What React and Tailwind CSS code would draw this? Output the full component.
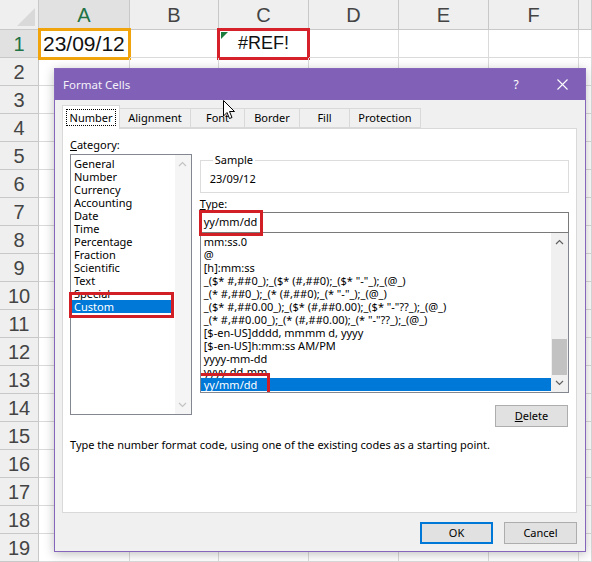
import React from 'react';

const UI = "'Noto Sans', 'Open Sans', sans-serif";
const SHEET = "'Liberation Sans', Arial, sans-serif";

const columns = [
  { label: 'A', selected: true },
  { label: 'B' },
  { label: 'C' },
  { label: 'D' },
  { label: 'E' },
  { label: 'F' },
  { label: '' },
];

const categories = [
  'General', 'Number', 'Currency', 'Accounting', 'Date', 'Time',
  'Percentage', 'Fraction', 'Scientific', 'Text', 'Special', 'Custom',
];

const formats = [
  'mm:ss.0',
  '@',
  '[h]:mm:ss',
  '_($* #,##0_);_($* (#,##0);_($* "-"_);_(@_)',
  '_(* #,##0_);_(* (#,##0);_(* "-"_);_(@_)',
  '_($* #,##0.00_);_($* (#,##0.00);_($* "-"??_);_(@_)',
  '_(* #,##0.00_);_(* (#,##0.00);_(* "-"??_);_(@_)',
  '[$-en-US]dddd, mmmm d, yyyy',
  '[$-en-US]h:mm:ss AM/PM',
  'yyyy-mm-dd',
  'yyyy-dd-mm',
  'yy/mm/dd',
];

const tabs = ['Number', 'Alignment', 'Font', 'Border', 'Fill', 'Protection'];
const tabWidths = ['w-[58px]', 'w-[71px]', 'w-[54px]', 'w-[55px]', 'w-[50px]', 'w-[71px]'];

const Chevron = ({ up, color }) => (
  <svg width="9" height="6" viewBox="0 0 9 6">
    <polyline
      points={up ? '1,5 4.5,1.5 8,5' : '1,1 4.5,4.5 8,1'}
      fill="none"
      stroke={color}
      strokeWidth="1.2"
    />
  </svg>
);

const Sheet = () => (
  <div
    className="grid grid-cols-[39px_91px_89px_90px_90px_90px_90px_1fr] grid-rows-[30px_repeat(19,28px)] bg-white"
    style={{ fontFamily: SHEET }}
  >
    {/* corner */}
    <div className="bg-[#efefef] border-r border-b border-[#c8c8c8] flex items-end justify-end p-[3px]">
      <svg width="18" height="18">
        <polygon points="18,0 18,18 0,18" fill="#d9d9d9" />
      </svg>
    </div>
    {columns.map((c, i) => (
      <div
        key={'h' + i}
        className={`border-r border-b border-[#c8c8c8] flex items-center justify-center text-[20px] ${
          c.selected ? 'bg-[#e1e1e1] text-[#217346]' : 'bg-[#efefef] text-[#444]'
        }`}
      >
        {c.label}
      </div>
    ))}
    {Array.from({ length: 19 }, (_, r) => (
      <React.Fragment key={r}>
        <div
          className={`border-r border-b border-[#c8c8c8] flex items-center justify-center text-[20px] ${
            r === 0 ? 'bg-[#e1e1e1] text-[#217346]' : 'bg-[#efefef] text-[#444]'
          }`}
        >
          {r + 1}
        </div>
        {columns.map((c, i) => (
          <div key={i} className="relative border-r border-b border-[#dadada]">
            {r === 0 && i === 0 && (
              <>
                <div className="absolute left-[4px] top-0 bottom-0 flex items-center text-[21px] text-[#111]">
                  23/09/12
                </div>
                <div className="absolute -left-[1px] -right-[2px] -top-[2px] -bottom-[3px] border-[3px] border-[#f0a30a]" />
              </>
            )}
            {r === 0 && i === 2 && (
              <>
                <div className="absolute inset-0 flex items-center justify-center text-[18px] text-[#111]">
                  #REF!
                </div>
                <div className="absolute left-[2px] top-[2px] w-0 h-0 border-t-[7px] border-r-[7px] border-t-[#1e7b3e] border-r-transparent" />
                <div className="absolute -left-[2px] -right-[2px] -top-[2px] -bottom-[3px] border-[3px] border-[#d6202a]" />
              </>
            )}
          </div>
        ))}
      </React.Fragment>
    ))}
  </div>
);

const Dialog = () => (
  <div
    className="absolute left-[54px] top-[68px] w-[532px] h-[484px] border border-[#8566bb] bg-[#f0f0f0] shadow-[0_2px_10px_rgba(0,0,0,0.25)] flex flex-col"
    style={{ fontFamily: UI }}
  >
    {/* title bar */}
    <div className="h-[31px] bg-[#8061b7] flex items-center justify-between pl-[8px] text-white shrink-0">
      <span className="text-[11.5px] text-[#f4f1fa]">Format Cells</span>
      <div className="flex items-center">
        <span className="text-[12px] w-[46px] text-center">?</span>
        <span className="w-[46px] flex justify-center">
          <svg width="11" height="11" viewBox="0 0 11 11">
            <path d="M0.5 0.5 L10.5 10.5 M10.5 0.5 L0.5 10.5" stroke="white" strokeWidth="1.1" />
          </svg>
        </span>
      </div>
    </div>

    <div className="flex-1 flex flex-col px-[7px] pt-[4px]">
      {/* tabs */}
      <div className="flex items-end h-[24px] text-[11px] text-black">
        {tabs.map((t, i) =>
          i === 0 ? (
            <div
              key={t}
              className={`${tabWidths[i]} h-[24px] bg-white border border-b-0 border-[#d9d9d9] flex items-center justify-center relative z-10 -mb-[1px]`}
            >
              <span className="border border-dotted border-black px-[3px] leading-[15px]">{t}</span>
            </div>
          ) : (
            <div
              key={t}
              className={`${tabWidths[i]} h-[20px] bg-[#f0f0f0] border border-l-0 border-[#d9d9d9] flex items-center justify-center`}
            >
              {t}
            </div>
          )
        )}
      </div>

      {/* panel */}
      <div className="w-[515px] h-[385px] bg-white border border-[#d9d9d9] flex flex-col px-[7px] pt-[8px] text-[11px] text-black">
        <div className="flex gap-[8px]">
          {/* category */}
          <div className="w-[122px] flex flex-col">
            <div className="h-[17px] leading-[16px]">
              <span className="underline">C</span>ategory:
            </div>
            <div className="h-[261px] border border-[#828790] flex">
              <div className="flex-1 pt-[2px] pr-[3px]">
                {categories.map((c) => (
                  <div
                    key={c}
                    className={`relative h-[13px] leading-[13px] pl-[3px] ${
                      c === 'Custom' ? 'bg-[#0078d7] text-white' : ''
                    }`}
                  >
                    {c}
                    {c === 'Custom' && (
                      <div className="absolute -left-[2px] -right-[2px] -top-[8px] -bottom-[5px] border-[3px] border-[#d21f26]" />
                    )}
                  </div>
                ))}
              </div>
              <div className="w-[16px] bg-[#f5f5f5] flex flex-col items-center justify-between py-[6px]">
                <Chevron up color="#c3c3c3" />
                <Chevron color="#c3c3c3" />
              </div>
            </div>
          </div>

          {/* type */}
          <div className="w-[370px] flex flex-col pt-[17px]">
            <fieldset className="border border-[#dcdcdc] h-[40px] px-[9px] -mt-[1px]">
              <legend className="px-[2px] ml-[3px] leading-[14px]">Sample</legend>
              <div className="pt-[5px] leading-[14px]">23/09/12</div>
            </fieldset>
            <div className="mt-[3px] h-[16px] leading-[16px]">
              <span className="underline">T</span>ype:
            </div>
            <div className="h-[21px] border border-[#7a7a7a] flex items-center pl-[3px] relative">
              <span className="relative">
                yy/mm/dd
                <span className="absolute -left-[5px] -right-[6px] -top-[4px] -bottom-[5px] border-[3px] border-[#d21f26]" />
              </span>
            </div>
            <div className="h-[160px] border border-t-0 border-[#828790] flex">
              <div className="flex-1 pt-[2px] overflow-hidden">
                {formats.map((f, i) => (
                  <div
                    key={i}
                    className={`relative h-[13px] leading-[13px] pl-[3px] whitespace-nowrap ${
                      i === formats.length - 1 ? 'bg-[#0078d7] text-white' : ''
                    }`}
                  >
                    {f}
                    {i === formats.length - 1 && (
                      <div className="absolute -left-[4px] w-[73px] -top-[5px] -bottom-[4px] border-[3px] border-[#d21f26]" />
                    )}
                  </div>
                ))}
              </div>
              <div className="w-[17px] bg-[#f0f0f0] flex flex-col items-center py-[6px]">
                <Chevron up color="#606060" />
                <div className="flex-1" />
                <div className="w-[15px] h-[36px] bg-[#c2c2c2] mb-[5px]" />
                <Chevron color="#606060" />
              </div>
            </div>
            <div className="flex justify-end mt-[12px] pr-[1px]">
              <button className="w-[73px] h-[22px] bg-[#e1e1e1] border border-[#adadad] text-[11px]">
                <span className="underline">D</span>elete
              </button>
            </div>
          </div>
        </div>
        <div className="mt-[11px] leading-[14px]">
          Type the number format code, using one of the existing codes as a starting point.
        </div>
      </div>

      {/* buttons */}
      <div className="flex justify-end gap-[11px] mt-[9px] pr-[1px] text-[11px]">
        <button className="w-[73px] h-[22px] bg-[#e1e1e1] border-2 border-[#0078d7]">OK</button>
        <button className="w-[73px] h-[22px] bg-[#e1e1e1] border border-[#adadad]">Cancel</button>
      </div>
    </div>
  </div>
);

export default function App() {
  return (
    <div className="relative w-[592px] h-[562px] overflow-hidden bg-white">
      <Sheet />
      <Dialog />
      {/* mouse pointer */}
      <svg className="absolute left-[223px] top-[100px]" width="13" height="20" viewBox="0 0 13 20">
        <path
          d="M0.5 0.5 L0.5 16 L4 12.5 L6.5 18.5 L9 17.5 L6.5 11.5 L11.5 11.5 Z"
          fill="white"
          stroke="black"
          strokeWidth="1"
        />
      </svg>
    </div>
  );
}
